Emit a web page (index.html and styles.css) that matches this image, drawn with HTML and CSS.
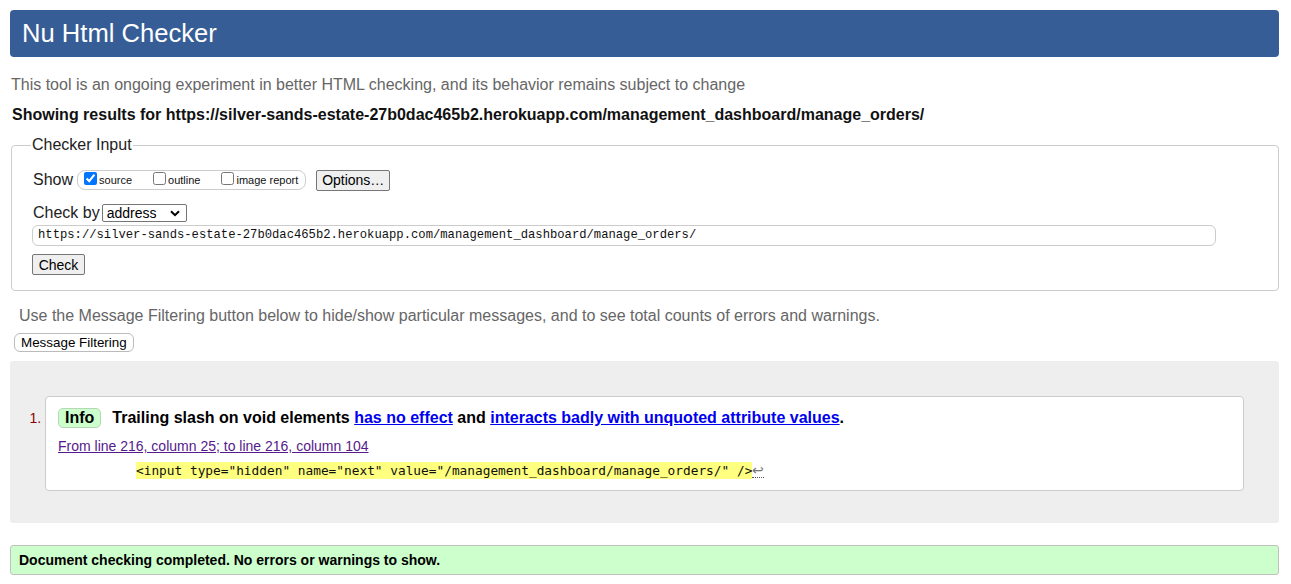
FILE: index.html
```html
<!DOCTYPE html>
<html>
<head>
<meta charset="utf-8">
<title>Nu Html Checker</title>
<link rel="stylesheet" href="styles.css">
</head>
<body>
<h1 class="title">Nu Html Checker</h1>
<p class="intro">This tool is an ongoing experiment in better HTML checking, and its behavior remains subject to change</p>
<p class="showing">Showing results for https://silver-sands-estate-27b0dac465b2.herokuapp.com/management_dashboard/manage_orders/</p>

<fieldset class="inputs">
  <legend class="legend">Checker Input</legend>
  <div class="row show-row">
    <span class="label">Show</span>
    <span class="group">
      <label class="opt"><input type="checkbox" class="cb" checked>source</label>
      <label class="opt"><input type="checkbox" class="cb">outline</label>
      <label class="opt"><input type="checkbox" class="cb">image report</label>
    </span>
    <button class="btn options">Options…</button>
  </div>
  <div class="row checkby-row">
    <span class="label">Check by</span>
    <span class="select">address<svg class="chev" width="10" height="7" viewBox="0 0 10 7"><path d="M1 1.2 L5 5.2 L9 1.2" fill="none" stroke="#000" stroke-width="2"/></svg></span>
  </div>
  <div class="url">https://silver-sands-estate-27b0dac465b2.herokuapp.com/management_dashboard/manage_orders/</div>
  <button class="btn check">Check</button>
</fieldset>

<p class="filter-note">Use the Message Filtering button below to hide/show particular messages, and to see total counts of errors and warnings.</p>
<button class="filter-btn">Message Filtering</button>

<div class="results">
  <ol class="messages">
    <li class="msg">
      <p class="msg-line"><span class="badge">Info</span><span class="msg-text">Trailing slash on void elements <a class="ref" href="#">has no effect</a> and <a class="ref" href="#">interacts badly with unquoted attribute values</a>.</span></p>
      <p class="loc"><a class="loc-link" href="#">From line 216, column 25; to line 216, column 104</a></p>
      <p class="extract"><code class="hl">&lt;input type="hidden" name="next" value="/management_dashboard/manage_orders/" /&gt;</code><span class="lf">↩</span></p>
    </li>
  </ol>
</div>

<p class="success">Document checking completed. No errors or warnings to show.</p>
</body>
</html>
```
FILE: styles.css
```css
html, body {
  margin: 0;
  padding: 0;
  background: #fff;
}
body {
  padding: 10px 12px 0 10px;
  font-family: "Liberation Sans", Arial, sans-serif;
  font-size: 16px;
  color: #000;
}
p { margin: 0; }

.title {
  margin: 0;
  height: 47px;
  box-sizing: border-box;
  background: #365d95;
  color: #fff;
  font-weight: normal;
  font-size: 25.6px;
  line-height: 46px;
  padding-left: 12px;
  border-radius: 4px;
}

.intro {
  margin-top: 18px;
  margin-left: 1px;
  line-height: 20px;
  color: #666;
}
.showing {
  margin-top: 10px;
  margin-left: 2px;
  line-height: 20px;
  font-weight: bold;
  color: #111;
}

.inputs {
  margin: 11px 0 0 1px;
  border: 1px solid #ccc;
  border-radius: 4px;
  padding: 0 20px 15px 20px;
  min-width: 0;
}
.legend {
  padding: 0 1px;
  margin-left: -1px;
  line-height: 18px;
  color: #222;
}

.row {
  display: flex;
  align-items: center;
}
.label { color: #222; }
.show-row {
  margin-top: 15px;
  height: 22px;
  margin-left: 1px;
}
.group {
  margin-left: 4px;
  display: flex;
  align-items: center;
  height: 18px;
  border: 1px solid #ccc;
  border-radius: 8px;
  padding: 0 7px 0 6px;
  font-size: 11px;
  color: #111;
}
.opt {
  display: flex;
  align-items: center;
  margin-right: 21px;
}
.opt:last-child { margin-right: 0; }
.cb {
  margin: 0 2px 0 0;
  width: 13px;
  height: 13px;
  position: relative;
  top: -2px;
}
.btn {
  font-family: "Liberation Sans", Arial, sans-serif;
  background: #efefef;
  border: 1px solid #767676;
  border-radius: 2px;
  color: #000;
  padding: 0;
  height: 21px;
  font-size: 14px;
}
.options {
  margin-left: 10px;
  width: 74px;
}

.checkby-row {
  margin-top: 11px;
  height: 22px;
  margin-left: 1px;
}
.select {
  margin-left: 2px;
  width: 85px;
  height: 18px;
  box-sizing: border-box;
  border: 1px solid #767676;
  border-radius: 2px;
  font-size: 14px;
  line-height: 16px;
  padding-left: 4px;
  display: flex;
  align-items: center;
  justify-content: space-between;
  padding-right: 6px;
}
.chev { display: block; }

.url {
  margin-top: 1px;
  width: 1184px;
  height: 21px;
  box-sizing: border-box;
  border: 1px solid #ccc;
  border-radius: 6px;
  font-family: "Liberation Mono", "Courier New", monospace;
  font-size: 12.2px;
  line-height: 19px;
  padding-left: 5px;
  color: #111;
}
.check {
  margin-top: 8px;
  width: 53px;
  display: block;
}

.filter-note {
  margin-top: 15px;
  margin-left: 9px;
  line-height: 20px;
  color: #666;
}
.filter-btn {
  margin: 7px 0 0 4px;
  height: 19px;
  padding: 0 6px;
  background: #fff;
  border: 1px solid #bbb;
  border-radius: 6px;
  font-family: "Liberation Sans", Arial, sans-serif;
  font-size: 13.4px;
  color: #000;
  display: block;
}

.results {
  margin-top: 9px;
  background: #eee;
  border-radius: 3px;
  height: 162px;
  box-sizing: border-box;
  padding-top: 35px;
}
.messages {
  margin: 0;
  padding: 0 0 0 35px;
  width: 1234px;
  box-sizing: border-box;
}
.msg {
  background: #fff;
  border: 1px solid #ccc;
  border-radius: 4px;
  height: 95px;
  box-sizing: border-box;
  padding: 11px 0 0 12px;
  font-size: 14px;
  color: #000;
}
.msg::marker {
  color: #8b0000;
  font-size: 14px;
}
.msg-line {
  display: flex;
  align-items: center;
  height: 20px;
}
.badge {
  display: inline-block;
  height: 20px;
  box-sizing: border-box;
  padding: 0 6px;
  background: #ccffcc;
  border: 1px solid #b4d8b4;
  border-radius: 5px;
  font-weight: bold;
  font-size: 16px;
  line-height: 18px;
}
.msg-text {
  margin-left: 11px;
  font-weight: bold;
  font-size: 16px;
}
.ref { color: #0000ee; }
.loc {
  margin-top: 10px;
  line-height: 16px;
}
.loc-link { color: #551a8b; }
.extract {
  margin-top: 8px;
  margin-left: 78px;
  line-height: 17px;
}
.hl {
  background: #ffff80;
  font-family: "DejaVu Sans Mono", "Liberation Mono", monospace;
  font-size: 12.8px;
  line-height: 17px;
  display: inline-block;
  color: #111;
}
.lf {
  color: #777;
  font-size: 14px;
  border-bottom: 1px dotted #555;
  line-height: 13px;
  display: inline-block;
}

.success {
  margin-top: 22px;
  height: 30px;
  box-sizing: border-box;
  background: #ccffcc;
  border: 1px solid #c0c0c0;
  border-radius: 3px;
  padding-left: 8px;
  font-weight: bold;
  font-size: 14px;
  line-height: 28px;
  color: #000;
}
```
